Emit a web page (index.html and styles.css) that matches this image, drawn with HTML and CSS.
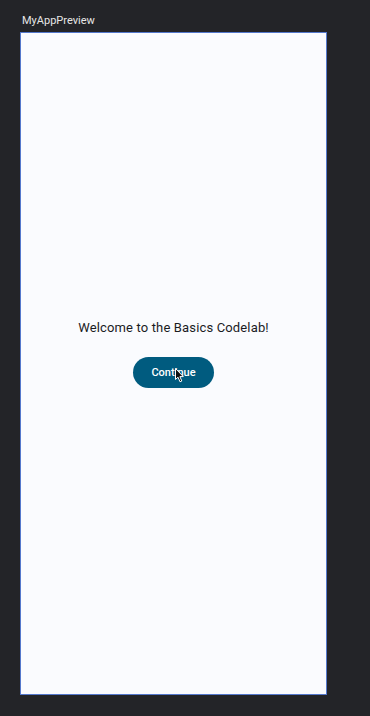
FILE: index.html
```html
<!DOCTYPE html>
<html>
<head>
<meta charset="utf-8">
<link rel="stylesheet" href="styles.css">
</head>
<body>
<div class="page">
  <div class="label">MyAppPreview</div>
  <div class="frame">
    <div class="content">
      <div class="welcome">Welcome to the Basics Codelab!</div>
      <div class="btn-wrap">
        <button class="btn">Continue</button>
        <svg class="cursor" width="10" height="15" viewBox="0 0 10 15">
          <path d="M0.5 0.5 L0.5 11.5 L3 9.2 L5 13.8 L6.8 13 L4.9 8.6 L8.3 8.6 Z" fill="#111" stroke="#fff" stroke-width="1"/>
        </svg>
      </div>
    </div>
  </div>
</div>
</body>
</html>
```
FILE: styles.css
```css
html, body {
  margin: 0;
  padding: 0;
  background: #232428;
}
.page {
  width: 370px;
  height: 716px;
  padding: 14px 0 0 20px;
  box-sizing: border-box;
  font-family: Roboto, "Noto Sans", sans-serif;
}
.label {
  color: #e6e6e6;
  font-size: 11px;
  line-height: 14px;
  height: 18px;
  padding-left: 2px;
}
.frame {
  width: 307px;
  height: 663px;
  box-sizing: border-box;
  border: 1px solid #5478cc;
  background: #fafbfe;
}
.content {
  height: 100%;
  display: flex;
  flex-direction: column;
  align-items: center;
  justify-content: center;
  gap: 21px;
  padding-bottom: 20px;
  box-sizing: border-box;
}
.welcome {
  font-size: 13px;
  color: #1b1b1f;
  letter-spacing: 0.15px;
  line-height: 16px;
}
.btn-wrap {
  position: relative;
}
.btn {
  width: 81px;
  height: 31px;
  border: none;
  border-radius: 16px;
  background: #005b7f;
  color: #ffffff;
  font-family: Roboto, "Noto Sans", sans-serif;
  font-weight: 500;
  font-size: 11px;
  padding: 0;
  display: block;
}
.cursor {
  position: absolute;
  left: 42px;
  top: 11px;
}
```
